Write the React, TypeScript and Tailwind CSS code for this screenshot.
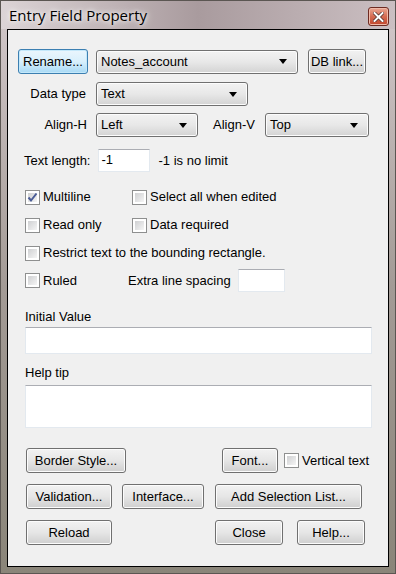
import type { ReactNode } from "react";

const font = { fontFamily: '"Liberation Sans", Arial, sans-serif' };

const Btn = ({ w, children, focus }: { w: string; children: ReactNode; focus?: boolean }) => (
  <div
    className={`${w} h-[25px] shrink-0 flex items-center justify-center rounded-[3px] border text-[13px] text-black ${
      focus
        ? "border-[#3c7fb1] bg-gradient-to-b from-[#eaf6fd] via-[#d9f0fc] to-[#a7d9f5] shadow-[inset_0_0_0_1px_#c4e8fa]"
        : "border-[#707070] bg-gradient-to-b from-[#f2f2f2] via-[#e6e6e6] to-[#cfcfcf] shadow-[inset_0_0_0_1px_#fcfcfc]"
    }`}
  >
    {children}
  </div>
);

const Combo = ({ w, value }: { w: string; value: string }) => (
  <div
    className={`${w} h-[24px] shrink-0 flex items-center justify-between pl-[4px] pr-[10px] rounded-[3px] border border-[#707070] bg-gradient-to-b from-[#f2f2f2] via-[#e8e8e8] to-[#d3d3d3] shadow-[inset_0_0_0_1px_#fcfcfc] text-[13px] text-black`}
  >
    <span>{value}</span>
    <svg width="8" height="5" viewBox="0 0 8 5">
      <path d="M0 0 H8 L4 5 Z" fill="#000" />
    </svg>
  </div>
);

const Box = ({ checked }: { checked?: boolean }) => (
  <div className="w-[15px] h-[15px] shrink-0 border border-[#8e8f8f] bg-white p-[2px]">
    <div className="relative w-full h-full bg-gradient-to-br from-[#cfd0d2] to-[#f5f5f5]">
      {checked && (
        <svg className="absolute -left-[1px] -top-[1px]" width="11" height="11" viewBox="0 0 11 11">
          <path d="M1.5 5.5 L4 8.5 L9.5 1.5" stroke="#4a5c96" strokeWidth="2" fill="none" />
        </svg>
      )}
    </div>
  </div>
);

const Check = ({ label, checked }: { label: string; checked?: boolean }) => (
  <div className="flex items-center gap-[3px] text-[13px] text-black">
    <Box checked={checked} />
    <span>{label}</span>
  </div>
);

const Field = ({ w, h, value }: { w: string; h: string; value?: string }) => (
  <div
    className={`${w} ${h} shrink-0 bg-white border border-[#e3e9ef] border-t-[#abadb3] px-[3px] pt-[2px] text-[13px] text-black leading-[16px]`}
  >
    {value}
  </div>
);

export default function App() {
  return (
    <div
      className="w-[396px] h-[574px] relative border border-[#5b5652] bg-gradient-to-b from-[#d3c9cb] via-[#a39b96] to-[#8a8579] overflow-hidden"
      style={font}
    >
      <div className="h-[28px] flex items-center justify-between pl-[8px] pr-[6px] bg-gradient-to-r from-[#dcd4d6] via-[#a99b9e] to-[#cbbfc2]">
        <span
          className="text-[15px] text-black mt-[1px] [text-shadow:0_0_8px_#fff,0_0_4px_#fff]"
          style={{ fontFamily: '"Open Sans", "Noto Sans", sans-serif', fontSize: 15 }}
        >
          Entry Field Property
        </span>
        <div className="w-[21px] h-[19px] mt-[3px] rounded-[3px] border border-[#6e2b22] bg-gradient-to-b from-[#e9a895] via-[#d56b52] to-[#c0462c] flex items-center justify-center shadow-[inset_0_0_0_1px_#f0b9a8]">
          <svg width="11" height="10" viewBox="0 0 11 10">
            <path d="M1.5 1 L9.5 9 M9.5 1 L1.5 9" stroke="#4a2a26" strokeWidth="3.4" strokeLinecap="square" />
            <path d="M1.5 1 L9.5 9 M9.5 1 L1.5 9" stroke="#fff" strokeWidth="2" strokeLinecap="square" />
          </svg>
        </div>
      </div>

      <div className="ml-[6px] w-[382px] h-[538px] border border-black bg-[#f0f0f0] flex flex-col text-[13px] text-black">
        {/* name row */}
        <div className="flex items-center mt-[19px] pl-[10px]">
          <Btn w="w-[70px]" focus>
            Rename...
          </Btn>
          <div className="ml-[8px]">
            <Combo w="w-[202px]" value="Notes_account" />
          </div>
          <div className="ml-[10px]">
            <Btn w="w-[58px]">DB link...</Btn>
          </div>
        </div>

        <div className="flex items-center mt-[8px]">
          <span className="w-[78px] text-right">Data type</span>
          <div className="ml-[10px]">
            <Combo w="w-[152px]" value="Text" />
          </div>
        </div>

        <div className="flex items-center mt-[7px]">
          <span className="w-[79px] text-right">Align-H</span>
          <div className="ml-[9px]">
            <Combo w="w-[102px]" value="Left" />
          </div>
          <span className="ml-[15px]">Align-V</span>
          <div className="ml-[10px]">
            <Combo w="w-[104px]" value="Top" />
          </div>
        </div>

        <div className="flex items-center mt-[12px] pl-[16px]">
          <span>Text length:</span>
          <div className="ml-[7px]">
            <Field w="w-[52px]" h="h-[23px]" value="-1" />
          </div>
          <span className="ml-[9px]">-1 is no limit</span>
        </div>

        {/* options */}
        <div className="flex items-center h-[20px] mt-[15px] pl-[17px]">
          <div className="w-[107px]">
            <Check label="Multiline" checked />
          </div>
          <Check label="Select all when edited" />
        </div>
        <div className="flex items-center h-[20px] mt-[8px] pl-[17px]">
          <div className="w-[107px]">
            <Check label="Read only" />
          </div>
          <Check label="Data required" />
        </div>
        <div className="flex items-center h-[20px] mt-[8px] pl-[17px]">
          <Check label="Restrict text to the bounding rectangle." />
        </div>
        <div className="flex items-center h-[23px] mt-[6px] pl-[17px]">
          <div className="w-[103px]">
            <Check label="Ruled" />
          </div>
          <span>Extra line spacing</span>
          <div className="ml-[7px]">
            <Field w="w-[47px]" h="h-[23px]" />
          </div>
        </div>

        {/* text fields */}
        <div className="flex flex-col pl-[17px] mt-[17px]">
          <span className="h-[16px] leading-[16px]">Initial Value</span>
          <div className="mt-[2px]">
            <Field w="w-[347px]" h="h-[27px]" />
          </div>
          <span className="h-[16px] leading-[16px] mt-[11px]">Help tip</span>
          <div className="mt-[4px]">
            <Field w="w-[347px]" h="h-[43px]" />
          </div>
        </div>

        {/* buttons */}
        <div className="flex items-center mt-[20px] pl-[18px]">
          <Btn w="w-[100px]">Border Style...</Btn>
          <div className="ml-[96px]">
            <Btn w="w-[56px]">Font...</Btn>
          </div>
          <div className="ml-[6px]">
            <Check label="Vertical text" />
          </div>
        </div>
        <div className="flex items-center mt-[11px] pl-[18px]">
          <Btn w="w-[86px]">Validation...</Btn>
          <div className="ml-[10px]">
            <Btn w="w-[82px]">Interface...</Btn>
          </div>
          <div className="ml-[11px]">
            <Btn w="w-[147px]">Add Selection List...</Btn>
          </div>
        </div>
        <div className="flex items-center mt-[11px] pl-[18px]">
          <Btn w="w-[86px]">Reload</Btn>
          <div className="ml-[103px]">
            <Btn w="w-[68px]">Close</Btn>
          </div>
          <div className="ml-[14px]">
            <Btn w="w-[68px]">Help...</Btn>
          </div>
        </div>
      </div>
    </div>
  );
}
